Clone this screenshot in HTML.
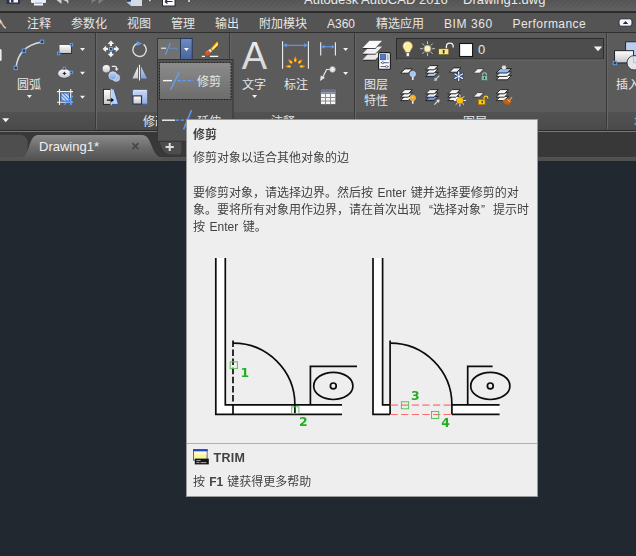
<!DOCTYPE html>
<html lang="zh-CN">
<head>
<meta charset="utf-8">
<title>AutoCAD 2016 - 修剪</title>
<style>
html,body{margin:0;padding:0;}
body{width:636px;height:556px;overflow:hidden;position:relative;background:#212830;
 font-family:"Liberation Sans","Noto Sans CJK SC",sans-serif;font-size:12px;}
.abs{position:absolute;}
.t{position:absolute;white-space:nowrap;line-height:16px;color:#e6e6e6;font-size:12px;}
#titlebar{left:0;top:0;width:636px;height:11px;background:repeating-linear-gradient(135deg,rgba(255,255,255,0.022) 0 1.5px,rgba(0,0,0,0) 1.5px 3.5px),linear-gradient(#535353,#5f5f5f);}
#tline{left:0;top:11px;width:636px;height:2px;background:#2c2c2c;}
#menubar{left:0;top:13px;width:636px;height:19px;background:#545454;}
#mline{left:0;top:32px;width:636px;height:1px;background:#303030;}
#ribbon{left:0;top:33px;width:636px;height:79px;background:#5b5b5b;}
#ptitle{left:0;top:112px;width:636px;height:18px;background:linear-gradient(#525252,#4a4a4a);}
#rline1{left:0;top:130px;width:636px;height:1px;background:#2b2b2b;}
#rline2{left:0;top:131px;width:636px;height:1px;background:#777;}
#tabbar{left:0;top:132px;width:636px;height:25px;background:#383838;}
#tabstrip{left:0;top:157px;width:636px;height:4px;background:#505050;}
.pdiv{position:absolute;top:33px;width:1px;height:96px;background:#3a3a3a;box-shadow:1px 0 0 #666;}
#tip{left:186px;top:119px;width:350px;height:376px;background:#eeeeee;border:1px solid #9a9a9a;will-change:transform;}
#tip .t{color:#424242;}
.q{display:inline-block;width:12px;}
svg{position:absolute;left:0;top:0;}
</style>
</head>
<body>
<!-- application chrome -->
<div id="titlebar" class="abs"></div>
<div id="tline" class="abs"></div>
<div id="menubar" class="abs"></div>
<div id="mline" class="abs"></div>
<div id="ribbon" class="abs"></div>
<div id="ptitle" class="abs"></div>
<div id="rline1" class="abs"></div>
<div id="rline2" class="abs"></div>
<div id="tabbar" class="abs"></div>
<div id="tabstrip" class="abs"></div>

<div class="pdiv" style="left:95px"></div>
<div class="pdiv" style="left:229px"></div>
<div class="pdiv" style="left:354px"></div>
<div class="pdiv" style="left:606px"></div>

<!-- title text (cut off at top) -->
<div class="t" id="ttl1" style="left:304px;top:-8px;font-size:13px;color:#e8e8e8;">Autodesk AutoCAD 2016</div>
<div class="t" id="ttl2" style="left:463px;top:-8px;font-size:13px;color:#e8e8e8;">Drawing1.dwg</div>

<!-- ribbon tab labels -->
<div class="t" style="left:-5.5px;top:16px;">入</div>
<div class="t" style="left:27px;top:16px;">注释</div>
<div class="t" style="left:71px;top:16px;">参数化</div>
<div class="t" style="left:127px;top:16px;">视图</div>
<div class="t" style="left:171px;top:16px;">管理</div>
<div class="t" style="left:215px;top:16px;">输出</div>
<div class="t" style="left:259px;top:16px;">附加模块</div>
<div class="t" style="left:327px;top:16px;">A360</div>
<div class="t" style="left:376px;top:16px;">精选应用</div>
<div class="t" style="left:444px;top:16px;letter-spacing:0.6px;">BIM 360</div>
<div class="t" style="left:512.5px;top:16px;letter-spacing:0.45px;">Performance</div>

<!-- ribbon big-button labels -->
<div class="t" style="left:17px;top:77px;">圆弧</div>
<div class="t" style="left:242px;top:77px;">文字</div>
<div class="t" style="left:284px;top:77px;">标注</div>
<div class="t" style="left:364px;top:77px;">图层</div>
<div class="t" style="left:364px;top:93px;">特性</div>
<div class="t" style="left:616px;top:77px;">插入</div>

<!-- panel titles -->
<div class="t" style="left:143px;top:114px;">修改</div>
<div class="t" style="left:271px;top:114px;">注释</div>
<div class="t" style="left:463px;top:114px;">图层</div>
<div class="t" style="left:634px;top:114px;color:#7db4ff;">块</div>

<!-- ribbon icons -->
<svg id="icons" width="636" height="556" viewBox="0 0 636 556">
<defs>
 <linearGradient id="gw" x1="0" y1="0" x2="0" y2="1"><stop offset="0" stop-color="#ffffff"/><stop offset="1" stop-color="#c4c6cc"/></linearGradient>
 <linearGradient id="gb" x1="0" y1="0" x2="0" y2="1"><stop offset="0" stop-color="#c2d5f6"/><stop offset="1" stop-color="#7ba2e4"/></linearGradient>
 <linearGradient id="gb2" x1="0" y1="0" x2="0" y2="1"><stop offset="0" stop-color="#cbdaf5"/><stop offset="1" stop-color="#8fa9e2"/></linearGradient>
 <linearGradient id="gbtn" x1="0" y1="0" x2="0" y2="1"><stop offset="0" stop-color="#6f8cc0"/><stop offset="1" stop-color="#48659c"/></linearGradient>
 <linearGradient id="gA" x1="0" y1="0" x2="0" y2="1"><stop offset="0" stop-color="#f4f4f4"/><stop offset="1" stop-color="#cfcfcf"/></linearGradient>
 <linearGradient id="gsel" x1="0" y1="0" x2="0" y2="1"><stop offset="0" stop-color="#8c8c8c"/><stop offset="1" stop-color="#6c6c6c"/></linearGradient>
 <linearGradient id="gtab" x1="0" y1="0" x2="0" y2="1"><stop offset="0" stop-color="#8a8a8a"/><stop offset="0.5" stop-color="#6a6a6a"/><stop offset="1" stop-color="#505050"/></linearGradient>
 <pattern id="hatch" width="2.6" height="2.6" patternUnits="userSpaceOnUse" patternTransform="rotate(45)"><rect width="2.6" height="2.6" fill="#d6e4fb"/><rect width="2.6" height="1.2" fill="#4c86e2"/></pattern>
</defs>

<!-- quick access toolbar (cropped) -->
<g>
 <rect x="6.5" y="-3" width="13.5" height="7" fill="#2b3550"/><rect x="9.5" y="-3" width="8.5" height="5.5" fill="#f4f6fa"/><rect x="11" y="0" width="2.5" height="2.5" fill="#2b3550"/>
 <rect x="31" y="-3" width="15" height="6" rx="1" fill="#e9edf4"/><rect x="34" y="2" width="9" height="3.5" fill="#f8f8f8"/><rect x="34.5" y="2.5" width="8" height="1.2" fill="#7aa6e8"/>
 <path d="M56.5 0 L61.5 -3 L61.5 4 Z M63 0 L68.3 -3 L68.3 4.2 L66.5 1.5 Z" fill="#cfcfcf"/>
 <path d="M103.5 0 L98.5 -3 L98.5 4 Z M97 0 L91.7 -3 L91.7 4.2 L93.5 1.5 Z" fill="#7f7f7f"/>
 <path d="M126.5 -3 H142 V6 H131 L126.5 2 Z" fill="#c3cad9"/><path d="M126.5 -3 H131 V1.5 L126.5 2Z" fill="#2a3a78"/><rect x="131" y="-1" width="11" height="7" fill="#d4d9e6"/>
 <rect x="149" y="0" width="1.6" height="1.2" fill="#dcdcdc"/>
 <rect x="162.5" y="-3" width="12.5" height="9" fill="#ffffff" stroke="#2a2a2a" stroke-width="1"/><path d="M165 1.5 H172.5 M165 1.5 l2.5 -2 M165 1.5 l2.5 2" stroke="#1e2a4a" stroke-width="1.2" fill="none"/>
 <rect x="188" y="0" width="2" height="2" rx="1" fill="#e8e8e8"/>
</g>

<!-- ribbon minimise button -->
<rect x="619" y="18.8" width="13" height="7.4" rx="2.2" fill="#f2f4f8" stroke="#252c3c" stroke-width="1"/>
<path d="M622.8 24 L625.5 21 L628.2 24 Z" fill="#252c3c"/>

<!-- draw panel -->
<rect x="-2" y="49" width="3.6" height="12" rx="1.5" fill="#ececec"/>
<path d="M16 68 Q18 46 42 42" stroke="#dcdcdc" stroke-width="1.4" fill="none"/>
<g fill="#3a3a3a" stroke="#5c9cf4" stroke-width="1"><rect x="40.3" y="40.1" width="3.4" height="3.4"/><rect x="22.3" y="49" width="3.4" height="3.4"/><rect x="14" y="66.2" width="3.4" height="3.4"/></g>
<path d="M26.9 95 h5 l-2.5 3 z" fill="#f0f0f0"/>
<rect x="60.3" y="46" width="11.5" height="8" fill="#2c2c2c"/><rect x="59.5" y="45" width="11.5" height="8" fill="url(#gw)"/>
<g fill="#3a3a3a" stroke="#5c9cf4" stroke-width="1"><rect x="70.3" y="43.5" width="2.4" height="2.4"/><rect x="57.5" y="52.3" width="2.4" height="2.4"/></g>
<g fill="#f0f0f0"><path d="M80 48 h5 l-2.5 3 z"/><path d="M80 71.8 h5 l-2.5 3 z"/><path d="M80 95.8 h5 l-2.5 3 z"/></g>
<ellipse cx="64.3" cy="73.5" rx="6.6" ry="4.7" fill="url(#gw)" stroke="#3a3a3a" stroke-width="0.6"/>
<path d="M62.7 73.4 h3.4 M64.4 71.8 v3.2" stroke="#222" stroke-width="1"/>
<g fill="#3a3a3a" stroke="#5c9cf4" stroke-width="1"><rect x="63.2" y="67.2" width="2.4" height="2.4"/><rect x="70.2" y="71.2" width="2.4" height="2.4"/></g>
<rect x="60.9" y="92.9" width="8.6" height="8.3" fill="url(#hatch)" stroke="#2a4c9c" stroke-width="0.9"/>
<path d="M59.5 89 V105 M70.7 89 V105 M57 91.6 H73 M57 102.3 H73" stroke="#f4f4f4" stroke-width="1.1" fill="none"/>
<path d="M72.9 96 L64.2 104.9 M67.6 102.3 h5.4 M70.6 99.6 v5.4" stroke="#5c9cf4" stroke-width="1.1" fill="none"/>
<path d="M2.2 118.2 h7 l-3.5 4 z" fill="#f4f4f4"/>

<!-- modify panel -->
<g fill="#f2f2f2"><path d="M110.9 40.6 l3.3 3.5 h-2.2 v1.9 h-2.2 v-1.9 h-2.2 z"/><path d="M110.9 57.2 l3.3 -3.5 h-2.2 v-1.9 h-2.2 v1.9 h-2.2 z"/><path d="M102.6 48.9 l3.5 -3.3 v2.2 h1.9 v2.2 h-1.9 v2.2 z"/><path d="M119.2 48.9 l-3.5 -3.3 v2.2 h-1.9 v2.2 h1.9 v2.2 z"/></g>
<rect x="109.5" y="47.5" width="2.8" height="2.8" fill="#2e2e2e" stroke="#6aa6f8" stroke-width="1.1"/>
<path d="M137 43.6 A6.7 6.7 0 1 0 143.6 44.4" stroke="#dedede" stroke-width="1.4" fill="none"/>
<path d="M136.8 41 L142.2 43.5 L136.8 46 Z" fill="#5c9cf4"/>
<circle cx="106.3" cy="68.8" r="3.7" fill="url(#gw)"/>
<circle cx="116.2" cy="77.8" r="3.6" fill="#a8c2ee" stroke="#d8e4f8" stroke-width="0.5"/><circle cx="112.8" cy="75.7" r="4" fill="url(#gb)" stroke="#dce8fa" stroke-width="0.6"/>
<path d="M111.8 66.4 h3 q1.8 0 1.8 1.8 v1" stroke="#f0f0f0" stroke-width="1.1" fill="none"/><path d="M114.6 68.6 h4 l-2 2.4 z" fill="#f0f0f0"/>
<path d="M132.4 78.5 H138 V66.4 Z" fill="url(#gw)"/><path d="M141 66.4 V78.5 H147 Z" fill="url(#gb)"/><path d="M139.5 64.8 V80.5" stroke="#f4f4f4" stroke-width="1.1"/>
<rect x="103.4" y="89.4" width="7.4" height="15" fill="url(#gw)" stroke="#202020" stroke-width="0.9"/><path d="M111.2 89.5 H114.1 L118.5 104.4 H111.2 Z" fill="#b9d3f4"/><path d="M114.1 89.5 L118.5 104.4 H111.4" stroke="#2c4a98" stroke-width="0.9" fill="none"/><path d="M111.1 88.7 V105.2" stroke="#fafafa" stroke-width="0.9"/>
<path d="M106.9 100.1 H112" stroke="#0c0c0c" stroke-width="1.2"/><path d="M111.2 97.8 L114 100.1 L111.2 102.4 Z" fill="#0c0c0c"/>
<rect x="132.8" y="89.7" width="14.6" height="14.4" fill="url(#gb2)" stroke="#4464b4" stroke-width="0.8"/><path d="M133.7 103 V90.6 H146.5" stroke="#e6eefc" stroke-width="0.8" fill="none"/><rect x="132.9" y="95.9" width="8.6" height="8.2" fill="url(#gw)" stroke="#2e2e2e" stroke-width="1.1"/>

<!-- trim split button -->
<rect x="157.5" y="38.5" width="23" height="21" fill="#717171" stroke="#3a3a3a" stroke-width="1"/>
<rect x="180.5" y="38.5" width="11.7" height="21" fill="url(#gbtn)" stroke="#27375a" stroke-width="1"/>
<path d="M161 48.2 H166" stroke="#f4f4f4" stroke-width="1.1"/><path d="M170.4 42.8 L165.4 54.4" stroke="#5c9cf4" stroke-width="1.2"/><path d="M169.4 48.2 H177" stroke="#5c9cf4" stroke-width="1.1" stroke-dasharray="2 1"/>
<path d="M183.9 48 h5 l-2.5 3 z" fill="#ffffff"/>
<!-- erase -->
<path d="M201.8 56.4 H205 M209.9 56.4 H218.2" stroke="#fafafa" stroke-width="1.3"/>
<path d="M210.2 48.5 L216.8 41 L218.3 41.5 V45.4 L212.3 51.1 Z" fill="#f2a20e" stroke="#2e2e2e" stroke-width="0.5"/>
<path d="M211.6 49.4 L217.6 42.6 L217.8 45 L212.4 50.4 Z" fill="#ffec78"/><path d="M213.4 48.4 L217.7 43.6" stroke="#fffbe0" stroke-width="0.8"/>
<path d="M207.8 50.2 L210.2 48.5 L212.3 51.1 L210.4 53 Z" fill="#e6e8ec" stroke="#3a3a3a" stroke-width="0.4"/>
<path d="M207.8 50.3 L210.3 53 Q209.8 55.6 207 55.7 Q204.6 55 205.2 52.6 Q206 50.8 207.8 50.3 Z" fill="#e9540c"/>
<path d="M206.2 52 Q207 51.2 208 51.4" stroke="#ff8a3a" stroke-width="0.8" fill="none"/>
<!-- annotation panel -->
<text x="254.4" y="68.8" font-family="Liberation Sans, sans-serif" font-size="38" text-anchor="middle" fill="url(#gA)">A</text>
<path d="M252.1 95 h5 l-2.5 3 z" fill="#f0f0f0"/>
<path d="M282.6 41.2 V68.8 M308.4 41.2 V68.8" stroke="#f0f0f0" stroke-width="1.1"/>
<path d="M284 45.3 H307" stroke="#5c9cf4" stroke-width="1.1"/><path d="M283.4 45.3 l3.4 -2.2 v4.4 z M307.6 45.3 l-3.4 -2.2 v4.4 z" fill="#5c9cf4"/>
<g><g transform="translate(295.3 59.5) rotate(0)"><path d="M0 -3.2 Q1.6 -0.6 1.4 1 Q1.2 2.6 0 2.6 Q-1.2 2.6 -1.4 1 Q-1.6 -0.6 0 -3.2 Z" fill="#f28a0c"/><ellipse cx="0" cy="0.9" rx="0.75" ry="1.3" fill="#ffd83a"/></g><g transform="translate(300.2 61.5) rotate(45)"><path d="M0 -3.2 Q1.6 -0.6 1.4 1 Q1.2 2.6 0 2.6 Q-1.2 2.6 -1.4 1 Q-1.6 -0.6 0 -3.2 Z" fill="#f28a0c"/><ellipse cx="0" cy="0.9" rx="0.75" ry="1.3" fill="#ffd83a"/></g><g transform="translate(302.2 66.4) rotate(90)"><path d="M0 -3.2 Q1.6 -0.6 1.4 1 Q1.2 2.6 0 2.6 Q-1.2 2.6 -1.4 1 Q-1.6 -0.6 0 -3.2 Z" fill="#f28a0c"/><ellipse cx="0" cy="0.9" rx="0.75" ry="1.3" fill="#ffd83a"/></g><g transform="translate(290.4 61.5) rotate(-45)"><path d="M0 -3.2 Q1.6 -0.6 1.4 1 Q1.2 2.6 0 2.6 Q-1.2 2.6 -1.4 1 Q-1.6 -0.6 0 -3.2 Z" fill="#f28a0c"/><ellipse cx="0" cy="0.9" rx="0.75" ry="1.3" fill="#ffd83a"/></g><g transform="translate(288.4 66.4) rotate(270)"><path d="M0 -3.2 Q1.6 -0.6 1.4 1 Q1.2 2.6 0 2.6 Q-1.2 2.6 -1.4 1 Q-1.6 -0.6 0 -3.2 Z" fill="#f28a0c"/><ellipse cx="0" cy="0.9" rx="0.75" ry="1.3" fill="#ffd83a"/></g></g>
<path d="M320.7 42.3 V55.6 M335.4 42.3 V55.6" stroke="#f0f0f0" stroke-width="1.1"/>
<path d="M322.5 46.8 H333.5" stroke="#5c9cf4" stroke-width="1.1"/><path d="M321.4 46.8 l3 -2 v4 z M334.7 46.8 l-3 -2 v4 z" fill="#5c9cf4"/>
<g fill="#f0f0f0"><path d="M343.1 48 h5 l-2.5 3 z"/><path d="M343.1 71.9 h5 l-2.5 3 z"/></g>
<path d="M329.8 69.5 H326.6 L322.6 77.6" stroke="#e4e4e4" stroke-width="1.2" fill="none" stroke-linejoin="round"/><path d="M320 81 L320.8 75.4 L325 77.8 Z" fill="#e4e4e4"/>
<circle cx="332.5" cy="69.4" r="2.9" fill="#ececec" stroke="#9a9a9a" stroke-width="0.7"/>
<rect x="320.6" y="89.4" width="15.2" height="15.2" fill="#f7f7f7" stroke="#3a3a3a" stroke-width="0.6"/><rect x="320.6" y="89.4" width="15.2" height="3.3" fill="#69738a"/>
<path d="M320.7 93.5 H335.7 M320.7 97.5 H335.7 M320.7 101 H335.7 M325.5 93 V104.5 M330.5 93 V104.5" stroke="#8c8c8c" stroke-width="1"/>
<!--LAYERS-BEGIN-->
<path d="M362.6 60.8 L369.4 52.6 H382.2 L375.4 60.8 Z" fill="#1e1e1e" opacity="0.8"/>
<path d="M362.6 59.8 L369.4 52.6 H382.2 L375.4 59.8 Z" fill="#e9e9ec"/>
<path d="M362.6 54.8 L369.4 46.6 H382.2 L375.4 54.8 Z" fill="#1e1e1e" opacity="0.8"/>
<path d="M362.6 53.8 L369.4 46.6 H382.2 L375.4 53.8 Z" fill="#f1f1f3"/>
<path d="M362.6 49.0 L369.4 40.8 H382.2 L375.4 49.0 Z" fill="#1e1e1e" opacity="0.8"/>
<path d="M362.6 48.0 L369.4 40.8 H382.2 L375.4 48.0 Z" fill="#fbfbfb"/>
<rect x="378.6" y="52.6" width="11.8" height="16.6" rx="1" fill="#fbfbfd" stroke="#1c1c1c" stroke-width="1.1"/>
<rect x="380.6" y="54.6" width="5" height="5.2" fill="#4a7ad4" stroke="#1e3a7a" stroke-width="0.6"/><rect x="386.6" y="54.4" width="2.2" height="5.6" fill="#b4b8c4"/>
<path d="M380.6 62.7 H388.8 M380.6 66.6 H388.8" stroke="#25345c" stroke-width="0.8"/><circle cx="382.8" cy="62.7" r="1.1" fill="#fff" stroke="#25345c" stroke-width="0.6"/><circle cx="386.6" cy="66.6" r="1.1" fill="#fff" stroke="#25345c" stroke-width="0.6"/>
<rect x="396.5" y="38.5" width="207" height="20.6" fill="#4d4d4d" stroke="#2c2c2c" stroke-width="1"/>
<path d="M397 59.8 H604" stroke="#6e6e6e" stroke-width="0.8"/>
<path d="M407.7 41.4 a4.8 4.8 0 0 1 3.5 8.1 q-1.3 1.4 -1.4 3 h-4.2 q-0.1 -1.6 -1.4 -3 a4.8 4.8 0 0 1 3.5 -8.1 z" fill="#fdeea4" stroke="#b89244" stroke-width="0.6"/>
<path d="M405.6 43.4 a3.4 3.4 0 0 0 -1.2 3.4" stroke="#fffdf0" stroke-width="1.1" fill="none"/>
<rect x="406.2" y="52.6" width="3" height="3.8" fill="#f4f4f4" stroke="#4a4a4a" stroke-width="0.5"/>
<path d="M432.1 48.7 L434.9 48.7 M430.8 52.0 L432.7 53.9 M427.5 53.3 L427.5 56.1 M424.2 52.0 L422.3 53.9 M422.9 48.7 L420.1 48.7 M424.2 45.4 L422.3 43.5 M427.5 44.1 L427.5 41.3 M430.8 45.4 L432.7 43.5" stroke="#d4d4d4" stroke-width="0.9"/>
<circle cx="427.5" cy="48.7" r="3.9" fill="#e8e4c8" opacity="0.5"/>
<circle cx="427.5" cy="48.7" r="2.9" fill="#fff3b8"/>
<path d="M446.4 48.8 V46.6 a3.4 3.4 0 0 1 6.8 0 V47.4" stroke="#f6f6f6" stroke-width="1.3" fill="none"/>
<rect x="438.7" y="48.8" width="10.1" height="5.9" fill="#f9e88c" stroke="#5a4a1a" stroke-width="0.6"/><rect x="442.8" y="50" width="1.7" height="3.5" fill="#3a3010"/>
<rect x="459.6" y="43.5" width="13" height="13" fill="#ffffff" stroke="#141414" stroke-width="1.1"/>
<path d="M593.8 46.6 h8.4 l-4.2 4.6 z" fill="#f4f4f4"/>
<path d="M400.6 73.2 L404.8 68.9 H412.4 L408.2 73.2 Z" fill="#f6f6f6" stroke="#1c1c1c" stroke-width="0.9"/>
<path d="M412.8 76.6 V80" stroke="#f4f4f4" stroke-width="1.5"/><circle cx="412.8" cy="74" r="2.7" fill="#9cc6fa" stroke="#e0eeff" stroke-width="0.6"/>
<path d="M400.6 100.6 L404.8 96.4 H412.4 L408.2 100.6 Z" fill="#f6f6f6" stroke="#1c1c1c" stroke-width="0.9"/><path d="M400.6 97.2 L404.8 93.0 H412.4 L408.2 97.2 Z" fill="#f6f6f6" stroke="#1c1c1c" stroke-width="0.9"/><path d="M400.6 93.8 L404.8 89.6 H412.4 L408.2 93.8 Z" fill="#f6f6f6" stroke="#1c1c1c" stroke-width="0.9"/>
<path d="M412.8 100.6 V103.8" stroke="#f4f4f4" stroke-width="1.5"/><circle cx="412.8" cy="97.9" r="2.7" fill="#f89a0c" stroke="#ffe08a" stroke-width="0.6"/><circle cx="412.6" cy="97.5" r="1.1" fill="#ffe060"/>
<path d="M425.6 76.6 L429.8 72.4 H438.2 L434.0 76.6 Z" fill="#a4c2f2" stroke="#1c1c1c" stroke-width="0.9"/><path d="M425.6 73.2 L429.8 69.0 H438.2 L434.0 73.2 Z" fill="#f6f6f6" stroke="#1c1c1c" stroke-width="0.9"/><path d="M425.6 69.8 L429.8 65.6 H438.2 L434.0 69.8 Z" fill="#f6f6f6" stroke="#1c1c1c" stroke-width="0.9"/>
<path d="M439.4 75.6 L435 80" stroke="#cfcfcf" stroke-width="1.1"/><path d="M434.2 80.9 L434.8 77.4 L437.6 80.2 Z" fill="#cfcfcf"/>
<path d="M425.6 100.6 L429.8 96.4 H438.2 L434.0 100.6 Z" fill="#6a98e6" stroke="#1c1c1c" stroke-width="0.9"/><path d="M425.6 97.2 L429.8 93.0 H438.2 L434.0 97.2 Z" fill="#e4eaf6" stroke="#1c1c1c" stroke-width="0.9"/><path d="M425.6 93.8 L429.8 89.6 H438.2 L434.0 93.8 Z" fill="#f6f6f6" stroke="#1c1c1c" stroke-width="0.9"/>
<path d="M434.4 104.6 L438.6 100.4" stroke="#e4e4e4" stroke-width="1.1"/><path d="M439.6 99.4 L439 103 L436.2 100 Z" fill="#e4e4e4"/>
<path d="M449.4 72.2 L453.6 67.9 H461.0 L456.8 72.2 Z" fill="#f6f6f6" stroke="#1c1c1c" stroke-width="0.9"/>
<path d="M458.7 80.6 L458.7 71.8 M454.9 78.4 L462.5 74.0 M454.9 74.0 L462.5 78.4" stroke="#1c3c8c" stroke-width="2.8" stroke-linecap="round"/><path d="M458.7 80.6 L458.7 71.8 M454.9 78.4 L462.5 74.0 M454.9 74.0 L462.5 78.4" stroke="#f4f8ff" stroke-width="1.3" stroke-linecap="round"/><circle cx="458.8" cy="76.4" r="1.6" fill="#f4f8ff" stroke="#1c3c8c" stroke-width="0.5"/>
<path d="M447.8 100.6 L452.0 96.4 H460.2 L456.0 100.6 Z" fill="#f6f6f6" stroke="#1c1c1c" stroke-width="0.9"/><path d="M447.8 97.2 L452.0 93.0 H460.2 L456.0 97.2 Z" fill="#f6f6f6" stroke="#1c1c1c" stroke-width="0.9"/><path d="M447.8 93.8 L452.0 89.6 H460.2 L456.0 93.8 Z" fill="#f6f6f6" stroke="#1c1c1c" stroke-width="0.9"/>
<path d="M463.5 100.5 L465.9 100.5 M462.4 103.0 L464.1 104.7 M459.9 104.1 L459.9 106.5 M457.4 103.0 L455.7 104.7 M456.3 100.5 L453.9 100.5 M457.4 98.0 L455.7 96.3 M459.9 96.9 L459.9 94.5 M462.4 98.0 L464.1 96.3" stroke="#f4f4f4" stroke-width="1"/><circle cx="459.9" cy="100.5" r="3.2" fill="#fcc20c"/>
<path d="M473.2 73.2 L477.6 68.7 H484.0 L479.6 73.2 Z" fill="#f6f6f6" stroke="#3a3a3a" stroke-width="0.9"/>
<path d="M482.6 76 V74.6 a1.9 1.9 0 0 1 3.8 0 V76" stroke="#9cc8bc" stroke-width="1.1" fill="none"/><rect x="481.2" y="75.8" width="6.4" height="4.8" fill="#8cbcae" stroke="#2e4a44" stroke-width="0.5"/><rect x="483.9" y="77" width="1.2" height="2.2" fill="#23403a"/>
<path d="M473.2 97.1 L477.6 92.6 H484.0 L479.6 97.1 Z" fill="#f6f6f6" stroke="#3a3a3a" stroke-width="0.9"/>
<path d="M484 99.6 V98 a1.9 1.9 0 0 1 3.8 0 V98.8" stroke="#fcd21c" stroke-width="1.1" fill="none"/><rect x="478.4" y="99.7" width="6.6" height="4.9" fill="#fcd40c" stroke="#b86c08" stroke-width="0.7"/><rect x="481.6" y="100.8" width="1.2" height="2.4" fill="#3a2808"/>
<path d="M496.0 79.8 L500.4 75.4 H511.6 L507.2 79.8 Z" fill="#f6f6f6" stroke="#1c1c1c" stroke-width="0.9"/><path d="M496.0 76.4 L500.4 72.0 H511.6 L507.2 76.4 Z" fill="#f6f6f6" stroke="#1c1c1c" stroke-width="0.9"/><path d="M496.0 73.0 L500.4 68.6 H511.6 L507.2 73.0 Z" fill="#94b8f0" stroke="#1c1c1c" stroke-width="0.9"/>
<circle cx="504" cy="67.6" r="2.3" fill="#e6e6e6" stroke="#7a7a7a" stroke-width="0.5"/>
<path d="M496.2 100.6 L500.4 96.4 H508.4 L504.2 100.6 Z" fill="#f6f6f6" stroke="#1c1c1c" stroke-width="0.9"/><path d="M496.2 97.2 L500.4 93.0 H508.4 L504.2 97.2 Z" fill="#f6f6f6" stroke="#1c1c1c" stroke-width="0.9"/><path d="M496.2 93.8 L500.4 89.6 H508.4 L504.2 93.8 Z" fill="#f6f6f6" stroke="#1c1c1c" stroke-width="0.9"/>
<path d="M502.4 100.2 L508.6 98.6 L511.8 101.4 L508.4 105 Q504.4 104.6 502.4 100.2 Z" fill="#c4600e"/><path d="M509.4 100.4 L512 97.2" stroke="#e49a4a" stroke-width="1.3"/><path d="M507.4 99.6 l2.6 2.6" stroke="#f4e4d0" stroke-width="0.8"/>
<rect x="625.6" y="41.8" width="14" height="14" fill="#b9cff2" stroke="#1e1e1e" stroke-width="0.9"/>
<rect x="614.6" y="50.7" width="19" height="12.2" fill="url(#gw)" stroke="#161616" stroke-width="0.9"/>
<circle cx="634.2" cy="62.8" r="7.2" fill="#e3e6ec" stroke="#1e1e1e" stroke-width="0.8"/>
<path d="M633.6 56 V62.6 H641" stroke="#a8aebc" stroke-width="0.8" fill="none"/>
<rect x="613.3" y="61.3" width="3.4" height="3.4" fill="#3a3a3a" stroke="#5c9cf4" stroke-width="1"/>
<!--LAYERS-END-->

<!-- file tabs -->
<path d="M-4 134.8 H19 Q27.6 134.8 27.6 143.4 V149 Q27.6 157.6 19 157.6 H-4 Z" fill="#4e4e4e"/>
<path d="M0 161 V157.6 H21 C30 157.6 28 135 38 135 H142 C153 135 150.5 157.6 163 157.6 H636 V161 Z" fill="url(#gtab)"/>
<rect x="163" y="157.6" width="473" height="3.4" fill="#505050"/>
<path d="M132.4 143.2 L138.4 149.2 M138.4 143.2 L132.4 149.2" stroke="#474747" stroke-width="1.7"/>
<path d="M159.6 141 H181 Q182.4 148 180.6 154.4 H170 Q162 154 159.6 141 Z" fill="#4d4d4d"/>
<path d="M165.6 147 H173.8 M169.7 142.9 V151.1" stroke="#dedede" stroke-width="2"/>

<!-- trim dropdown menu -->
<rect x="157.5" y="59.5" width="75.5" height="81.8" fill="#535353" stroke="#343434" stroke-width="1"/>
<rect x="159.5" y="62.5" width="71.5" height="37" fill="url(#gsel)" stroke="#1a1a1a" stroke-width="0.9" stroke-dasharray="2 1"/>
<path d="M163 80.6 H172" stroke="#f4f4f4" stroke-width="1.4"/><path d="M179.2 72.2 L170.6 89.6" stroke="#64a2f8" stroke-width="1.3"/><path d="M177.4 80.6 H193" stroke="#5c9cf4" stroke-width="1.3" stroke-dasharray="3.4 1.6"/>
<path d="M162 120.2 H175" stroke="#f4f4f4" stroke-width="1.4"/><path d="M175.6 120.2 H187" stroke="#5c9cf4" stroke-width="1.3" stroke-dasharray="3.4 1.6"/><path d="M191.6 110 L183.6 129.4" stroke="#5c9cf4" stroke-width="1.5"/>
</svg>
<div class="t" style="left:478px;top:42px;font-size:13px;">0</div>
<div class="t" style="left:197px;top:74px;">修剪</div>
<div class="t" style="left:197px;top:114px;">延伸</div>

<!-- file tabs -->
<div class="t" style="left:39px;top:139px;font-size:13px;color:#f0f0f0;">Drawing1*</div>

<!-- tooltip -->
<div id="tip" class="abs">
  <div class="t" style="left:6px;top:7px;font-weight:bold;">修剪</div>
  <div class="t" style="left:6px;top:30px;">修剪对象以适合其他对象的边</div>
  <div class="t" style="left:6px;top:65px;line-height:17px;word-spacing:1.2px;">要修剪对象，请选择边界。然后按 Enter 键并选择要修剪的对<br>象。要将所有对象用作边界，请在首次出现<span class="q" style="text-align:right">“</span>选择对象<span class="q" style="text-align:left">”</span>提示时<br>按 Enter 键。</div>
  <div class="abs" style="left:0;top:323px;width:350px;height:1px;background:#b0b0b0;"></div>
  <div class="t" style="left:26.5px;top:330px;font-weight:bold;font-size:12.5px;letter-spacing:0.25px;">TRIM</div>
  <div class="t" style="left:6px;top:354px;word-spacing:0.8px;">按 <b>F1</b> 键获得更多帮助</div>
</div>

<!-- tooltip illustration -->
<svg id="illus" width="636" height="556" viewBox="0 0 636 556" style="will-change:transform">
<g fill="#ffffff" stroke="none">
 <path d="M215.8 258 H225.3 V404.9 H342 V414.3 H215.8 Z"/>
 <path d="M373 258 H382.6 V404.9 H390.1 V414.3 H373 Z"/>
 <rect x="451.6" y="404.9" width="48" height="9.4"/>
</g>
<g fill="none" stroke="#0c0c0c" stroke-width="1.7">
 <!-- left figure -->
 <path d="M215.8 258 V414.3 H342"/>
 <path d="M225.3 258 V404.9 H342"/>
 <path d="M233 404 V414.3"/>
 <path d="M233 340.4 V404" stroke-dasharray="6.5 2.6"/>
 <path d="M233 343.2 A61.6 61.6 0 0 1 294.9 404.9 V414.3"/>
 <path d="M310.4 404.9 V366.4 H357"/>
 <ellipse cx="333.3" cy="385.9" rx="19.6" ry="13.6"/>
 <circle cx="333.3" cy="385.9" r="2.9"/>
 <!-- right figure -->
 <path d="M373 258 V414.3 H390.1"/>
 <path d="M382.6 258 V404.9 H390.1"/>
 <path d="M390.1 340.4 V414.3"/>
 <path d="M390.1 343.2 A61.6 61.6 0 0 1 451.9 404.9 V414.3"/>
 <path d="M451.9 404.9 H499.6 M451.9 414.3 H499.6"/>
 <path d="M467.7 404.9 V366.4 H492.6"/>
 <ellipse cx="490.3" cy="385.9" rx="19.6" ry="13.6"/>
 <circle cx="490.3" cy="385.9" r="2.9"/>
</g>
<path d="M390.6 405.1 H451.4" stroke="#ff9090" stroke-width="1.7" stroke-dasharray="7.2 3.4" fill="none"/><path d="M390.6 414.5 H451.4" stroke="#ff6a6a" stroke-width="1.2" stroke-dasharray="7.2 3.4" fill="none"/>
<g fill="none" stroke="#5cc05c" stroke-width="1">
 <rect x="230.2" y="361.8" width="7.2" height="6.8"/>
 <rect x="291.7" y="406.8" width="7.2" height="6.8"/>
 <rect x="401.4" y="401.8" width="7.2" height="7"/>
 <rect x="431.5" y="411.5" width="7.2" height="7"/>
</g>
<g font-family="DejaVu Sans, Liberation Sans, sans-serif" font-weight="bold" font-size="12.4" fill="#25ad25">
 <text x="240.6" y="376.8">1</text>
 <text x="299" y="425.8">2</text>
 <text x="411" y="399.8">3</text>
 <text x="441.3" y="426.8">4</text>
</g>
<!-- command icon -->
<rect x="193.5" y="449.6" width="13.6" height="10.6" fill="#fbf59e" stroke="#3a58c0" stroke-width="0.9"/>
<rect x="193" y="449.1" width="14.6" height="2.2" fill="#2848c4"/>
<path d="M194.6 452 H206.6 V454.5 H194.6 Z" fill="#ffffd8" opacity="0.8"/>
<rect x="194.8" y="458.6" width="14" height="5.8" fill="#141414"/>
<path d="M196.4 460.6 H200.6 M196.4 462.6 H199.4 M200.6 462.6 H206.4" stroke="#d0d0d0" stroke-width="0.8"/>
</svg>
</body>
</html>
